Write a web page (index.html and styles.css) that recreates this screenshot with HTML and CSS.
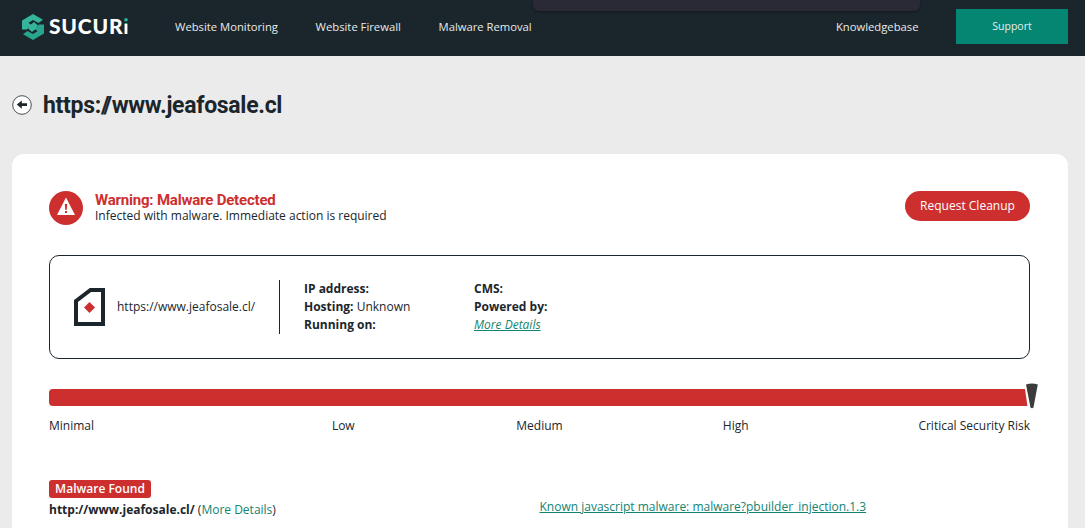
FILE: index.html
```html
<!DOCTYPE html>
<html lang="en">
<head>
    <meta charset="UTF-8">
    <meta name="viewport" content="width=device-width, initial-scale=1.0">
    <title>Sucuri SiteCheck</title>
    <link rel="stylesheet" href="styles.css">
</head>
<body>
    <header class="header">
        <a class="logo" href="#">
            <svg width="22" height="26" viewBox="0 0 22 26">
                <path fill="#35b59c" d="M11 0l10 5.700-4.500 3.300L11 6 6.500 8.700 8.500 10.500h4L11 13H7l-2 2.500H0v-9z"/>
                <path fill="#28a58c" d="M11 26L1 20.300 5.500 17l5.500 3 4.500-2.700-2-1.800h-4L11 13h4l2-2.500h5v9z"/>
                <path fill="#35b59c" d="M9 10.500l3-2.500 4 3.500-3 4-3 2.500-4-3.500z"/>
            </svg>
            <span class="logo-text">SUCUR<span class="logo-i">i</span></span>
        </a>
        <nav class="nav">
            <a href="#">Website Monitoring</a>
            <a href="#">Website Firewall</a>
            <a href="#">Malware Removal</a>
        </nav>
        <a class="knowledge" href="#">Knowledgebase</a>
        <a class="support" href="#">Support</a>
        <div class="top-tab"></div>
    </header>

    <div class="title-row">
        <svg class="back" width="20" height="20" viewBox="0 0 20 20">
            <circle cx="10" cy="10" r="9.300" fill="#fff" stroke="#1b262c" stroke-width="0.8"/>
            <path fill="#1b262c" d="M4.800 9.500l5-4v2.700h5.200v2.800H9.800v2.700z"/>
        </svg>
        <h1>https:<span class="slashes">//</span>www.jeafosale.cl</h1>
    </div>

    <main class="card">
        <div class="warning">
            <svg width="34" height="34" viewBox="0 0 34 34">
                <circle cx="17" cy="17" r="17" fill="#cd2f2f"/>
                <path fill="#fff" d="M17 6.500l9 17.500H8z"/>
                <path fill="#cd2f2f" d="M15.800 13h2.400l-.5 6h-1.400zM16 20h2v2h-2z"/>
            </svg>
            <div class="warning-text">
                <h2>Warning: Malware Detected</h2>
                <p>Infected with malware. Immediate action is required</p>
            </div>
            <a class="cleanup" href="#">Request Cleanup</a>
        </div>

        <div class="site-info">
            <div class="site">
                <svg width="31" height="38" viewBox="0 0 31 38">
                    <path fill="#fff" stroke="#1b262c" stroke-width="4" d="M2 13L16.500 2H29v34H2z"/>
                    <path fill="#cd2f2f" d="M15.500 14l5.500 5.500-5.500 5.500-5.500-5.500z"/>
                </svg>
                <span>https://www.jeafosale.cl/</span>
            </div>
            <div class="details">
                <div><b>IP address:</b></div>
                <div><b>Hosting:</b> Unknown</div>
                <div><b>Running on:</b></div>
            </div>
            <div class="details">
                <div><b>CMS:</b></div>
                <div><b>Powered by:</b></div>
                <div><a class="more" href="#">More Details</a></div>
            </div>
        </div>

        <div class="risk">
            <div class="risk-bar"></div>
            <svg class="pointer" width="16" height="28" viewBox="0 0 16 28">
                <path fill="#fff" d="M0 0h16L11 28H4z"/>
                <path fill="#3c3c3c" d="M2 2.500Q8 .5 13.800 2.500L9.500 25.500Q8 27 6.500 25.500z"/>
            </svg>
        </div>
        <div class="labels">
            <span>Minimal</span>
            <span>Low</span>
            <span>Medium</span>
            <span>High</span>
            <span>Critical Security Risk</span>
        </div>

        <div class="found">
            <div>
                <span class="badge">Malware Found</span>
                <div class="found-url"><b>http://www.jeafosale.cl/</b> (<a href="#">More Details</a>)</div>
            </div>
            <a class="malware-link" href="#">Known javascript malware: malware?pbuilder_injection.1.3</a>
        </div>
    </main>
</body>
</html>
```

FILE: styles.css
```css
* {
    box-sizing: border-box;
}

body {
    margin: 0;
    height: 528px;
    overflow: hidden;
    background-color: #ebebeb;
    color: #1b262c;
    font-family: "Open Sans", "Noto Sans", sans-serif;
    font-size: 12px;
    line-height: 18px;
}

h1, h2, p {
    margin: 0;
}

a {
    color: #128471;
    text-decoration: none;
}

svg {
    display: block;
    flex-shrink: 0;
}

.header {
    position: relative;
    display: flex;
    align-items: center;
    height: 56px;
    padding: 0 17px 3px 22px;
    background-color: #1b262c;
    font-size: 11.25px;
}

.header a {
    color: #e8eaea;
}

.logo {
    display: flex;
    align-items: center;
    gap: 5px;
    width: 153px;
}

.header .logo-text {
    color: #fff;
    font-family: Lato, sans-serif;
    font-size: 21px;
    font-weight: 900;
    letter-spacing: 0.8px;
    line-height: 26px;
    margin-top: -2px;
}

.logo-i {
    background: linear-gradient(#2bb39a 0 11px, #fff 11px);
    -webkit-background-clip: text;
    background-clip: text;
    color: transparent;
}

.nav {
    display: flex;
    gap: 37.7px;
}

.knowledge {
    margin-left: auto;
}

.header .support {
    width: 112px;
    height: 35px;
    margin-left: 37.5px;
    background-color: #048673;
    font-size: 10.5px;
    line-height: 35px;
    text-align: center;
}

.top-tab {
    position: absolute;
    top: 0;
    left: 533px;
    width: 387px;
    height: 11px;
    border-radius: 0 0 6px 6px;
    background-color: #292a35;
    box-shadow: 0 1px 3px rgba(0,0,0,0.4);
}

.title-row {
    display: flex;
    align-items: center;
    gap: 11px;
    height: 98px;
    padding: 0 12px;
}

h1 {
    padding-top: 2px;
    font-family: Roboto, sans-serif;
    font-size: 23px;
    font-weight: 700;
    letter-spacing: -0.3px;
    line-height: 30px;
}

.slashes {
    letter-spacing: -3.3px;
    margin-right: 3px;
}

.card {
    height: 390px;
    margin: 0 17px 0 12px;
    padding: 37px 38px 0 37px;
    border-radius: 12px 12px 0 0;
    background-color: #fff;
}

.warning {
    display: flex;
    align-items: flex-start;
    height: 64px;
}

.warning-text {
    margin-left: 12px;
}

h2 {
    height: 16px;
    color: #cd2f2f;
    font-family: Roboto, sans-serif;
    font-size: 15px;
    font-weight: 700;
    letter-spacing: -0.2px;
    line-height: 18px;
}

.cleanup {
    width: 125px;
    height: 30px;
    margin-left: auto;
    border-radius: 15px;
    background-color: #cd2f2f;
    color: #fff;
    line-height: 29px;
    text-align: center;
}

.site-info {
    display: flex;
    align-items: center;
    height: 104px;
    padding-left: 24px;
    border: 1px solid #1b262c;
    border-radius: 10px;
}

.site {
    display: flex;
    align-items: center;
    gap: 12px;
    width: 206px;
    height: 54px;
    border-right: 1px solid #1b262c;
}

.details {
    width: 170px;
}

.details:nth-child(2) {
    margin-left: 24px;
}

.more {
    font-style: italic;
    text-decoration: underline;
}

.risk {
    position: relative;
    margin-top: 30px;
}

.risk-bar {
    height: 17px;
    border-radius: 4px;
    background-color: #cd2f2f;
}

.pointer {
    position: absolute;
    top: -7px;
    right: -10px;
}

.labels {
    display: grid;
    grid-template-columns: repeat(5, 1fr);
    margin-top: 11px;
    text-align: center;
}

.labels span:first-child {
    text-align: left;
}

.labels span:last-child {
    text-align: right;
}

.found {
    display: grid;
    grid-template-columns: 1fr 1fr;
    align-items: center;
    margin-top: 45px;
}

.badge {
    display: block;
    width: 102px;
    height: 18px;
    border-radius: 3px;
    background-color: #cd2f2f;
    color: #fff;
    font-weight: 600;
    line-height: 18px;
    text-align: center;
}

.found-url {
    margin-top: 3px;
}

.malware-link {
    margin-top: 15px;
    text-decoration: underline;
}
```
